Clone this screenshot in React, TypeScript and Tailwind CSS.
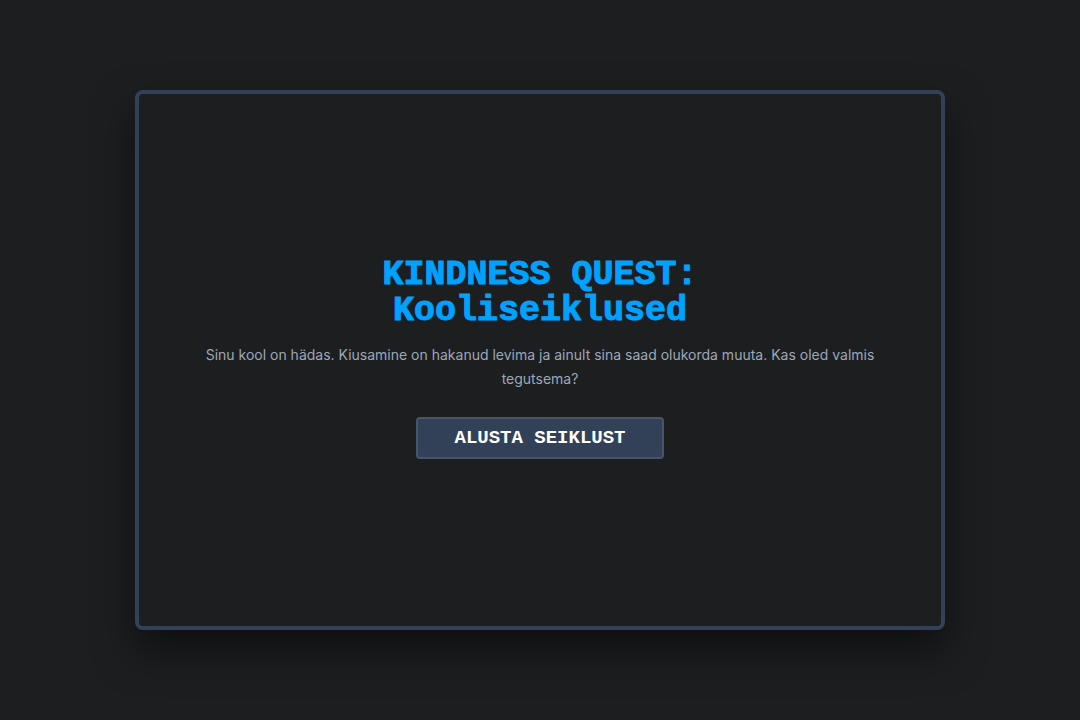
interface StartScreenProps {
  title: string
  subtitle: string
  intro: string
  onStart?: () => void
}

function StartScreen({ title, subtitle, intro, onStart }: StartScreenProps) {
  return (
    <section className="flex h-[75vh] w-3/4 flex-col items-center justify-center rounded-lg border-4 border-[#334158] bg-[#1d1e20] px-8 pb-1 text-center shadow-[0_20px_40px_rgba(0,0,0,0.5)]">
      <h1 className="font-['Liberation_Mono',monospace] text-[35px] leading-9 font-bold text-[#00a2ff] [-webkit-text-stroke:1px_#00a2ff]">
        {title}
        <br />
        {subtitle}
      </h1>

      <p className="mt-3.5 max-w-3xl px-4 text-sm leading-6 text-[#9ca8b8]">{intro}</p>

      <button
        type="button"
        onClick={onStart}
        className="mt-6.5 cursor-pointer rounded border-2 border-[#475569] bg-[#334158] px-9 py-2 font-['Liberation_Mono',monospace] text-[19px] leading-[22px] font-bold text-white uppercase hover:bg-[#475569]"
      >
        Alusta seiklust
      </button>
    </section>
  )
}

export default function App() {
  return (
    <main className="flex min-h-screen items-center justify-center bg-[#1d1e20] font-[Inter,sans-serif]">
      <StartScreen
        title="KINDNESS QUEST:"
        subtitle="Kooliseiklused"
        intro="Sinu kool on hädas. Kiusamine on hakanud levima ja ainult sina saad olukorda muuta. Kas oled valmis tegutsema?"
      />
    </main>
  )
}
